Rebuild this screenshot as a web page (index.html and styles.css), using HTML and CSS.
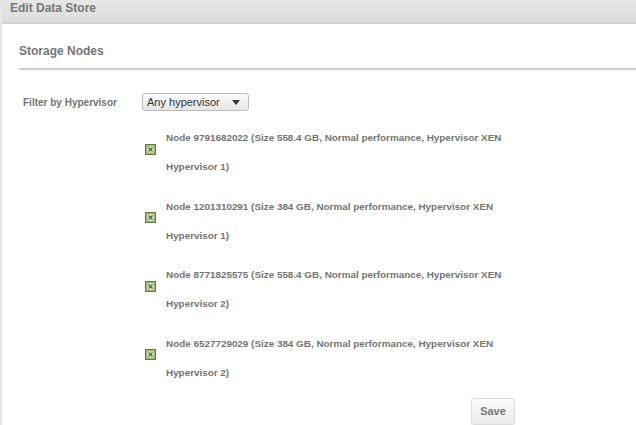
FILE: index.html
```html
<!DOCTYPE html>
<html>
<head>
<meta charset="utf-8">
<link rel="stylesheet" href="styles.css">
</head>
<body>
<div class="page">
  <div class="header">Edit Data Store</div>
  <div class="content">
    <h2 class="section-title">Storage Nodes</h2>
    <div class="filter-row">
      <span class="filter-label">Filter by Hypervisor</span>
      <div class="select">
        <span>Any hypervisor</span>
        <svg class="caret" width="8" height="5" viewBox="0 0 8 5"><path d="M0 0H8L4 5Z" fill="#333"/></svg>
      </div>
    </div>
    <ul class="nodes">
      <li class="node">
        <svg class="check" width="11" height="11" viewBox="0 0 11 11"><rect x="0.5" y="0.5" width="10" height="10" fill="#9db679" stroke="#5f7d3b"/><rect x="2.5" y="2.5" width="6" height="6" fill="#e9f0dc"/><path d="M3.5 3.5L7.5 7.5M7.5 3.5L3.5 7.5" stroke="#4d6a2b" stroke-width="1.3"/></svg>
        <span class="node-text">Node 9791682022 (Size 558.4 GB, Normal performance, Hypervisor XEN Hypervisor 1)</span>
      </li>
      <li class="node">
        <svg class="check" width="11" height="11" viewBox="0 0 11 11"><rect x="0.5" y="0.5" width="10" height="10" fill="#9db679" stroke="#5f7d3b"/><rect x="2.5" y="2.5" width="6" height="6" fill="#e9f0dc"/><path d="M3.5 3.5L7.5 7.5M7.5 3.5L3.5 7.5" stroke="#4d6a2b" stroke-width="1.3"/></svg>
        <span class="node-text">Node 1201310291 (Size 384 GB, Normal performance, Hypervisor XEN Hypervisor 1)</span>
      </li>
      <li class="node">
        <svg class="check" width="11" height="11" viewBox="0 0 11 11"><rect x="0.5" y="0.5" width="10" height="10" fill="#9db679" stroke="#5f7d3b"/><rect x="2.5" y="2.5" width="6" height="6" fill="#e9f0dc"/><path d="M3.5 3.5L7.5 7.5M7.5 3.5L3.5 7.5" stroke="#4d6a2b" stroke-width="1.3"/></svg>
        <span class="node-text">Node 8771825575 (Size 558.4 GB, Normal performance, Hypervisor XEN Hypervisor 2)</span>
      </li>
      <li class="node">
        <svg class="check" width="11" height="11" viewBox="0 0 11 11"><rect x="0.5" y="0.5" width="10" height="10" fill="#9db679" stroke="#5f7d3b"/><rect x="2.5" y="2.5" width="6" height="6" fill="#e9f0dc"/><path d="M3.5 3.5L7.5 7.5M7.5 3.5L3.5 7.5" stroke="#4d6a2b" stroke-width="1.3"/></svg>
        <span class="node-text">Node 6527729029 (Size 384 GB, Normal performance, Hypervisor XEN Hypervisor 2)</span>
      </li>
    </ul>
    <div class="actions">
      <button class="btn">Save</button>
    </div>
  </div>
</div>
</body>
</html>
```

FILE: styles.css
```css
html, body {
  margin: 0;
  padding: 0;
  background: #fff;
}
body {
  font-family: "Liberation Sans", Arial, sans-serif;
  color: #777;
}
.page {
  border-left: 2px solid #e6e6e6;
  min-height: 425px;
  box-sizing: border-box;
  overflow: hidden;
}
.header {
  height: 22px;
  line-height: 16px;
  padding-left: 8px;
  font-size: 12px;
  font-weight: bold;
  color: #777;
  background: linear-gradient(#e9e7e8, #dddddd);
  border-bottom: 2px solid #d2d2d2;
}
.content {
  padding-left: 17px;
}
.section-title {
  margin: 20px 0 0;
  font-size: 12px;
  line-height: 14px;
  font-weight: bold;
  color: #747474;
  padding-bottom: 10px;
  border-bottom: 2px solid #cfcfcf;
}
.filter-row {
  display: flex;
  align-items: center;
  margin-top: 23px;
  padding-left: 4px;
}
.filter-label {
  width: 119px;
  font-size: 10px;
  font-weight: bold;
  color: #737373;
}
.select {
  box-sizing: border-box;
  width: 107px;
  height: 18px;
  border: 1px solid #bdbdbd;
  border-radius: 3px;
  background: linear-gradient(#fafafa, #e6e6e6);
  display: flex;
  align-items: center;
  justify-content: space-between;
  padding: 0 8px 0 4px;
  font-size: 11px;
  color: #333;
}
.caret {
  display: block;
}
.nodes {
  list-style: none;
  margin: 12px 0 0;
  padding: 0 0 0 126px;
  display: flex;
  flex-direction: column;
  gap: 10.5px;
}
.node {
  display: flex;
  align-items: flex-start;
  gap: 10px;
}
.check {
  flex: none;
  margin-top: 20.5px;
}
.node-text {
  width: 360px;
  font-size: 9.9px;
  font-weight: bold;
  line-height: 29px;
  color: #747474;
}
.actions {
  margin-top: 11px;
  padding-left: 452px;
}
.btn {
  width: 44px;
  height: 27px;
  border: 1px solid #dcdcdc;
  border-radius: 3px;
  background: linear-gradient(#fbfbfb, #ececec);
  box-shadow: 0 1px 1px rgba(0,0,0,0.08);
  font-family: "Liberation Sans", Arial, sans-serif;
  font-size: 11px;
  font-weight: bold;
  color: #777;
  padding: 0;
}
```
